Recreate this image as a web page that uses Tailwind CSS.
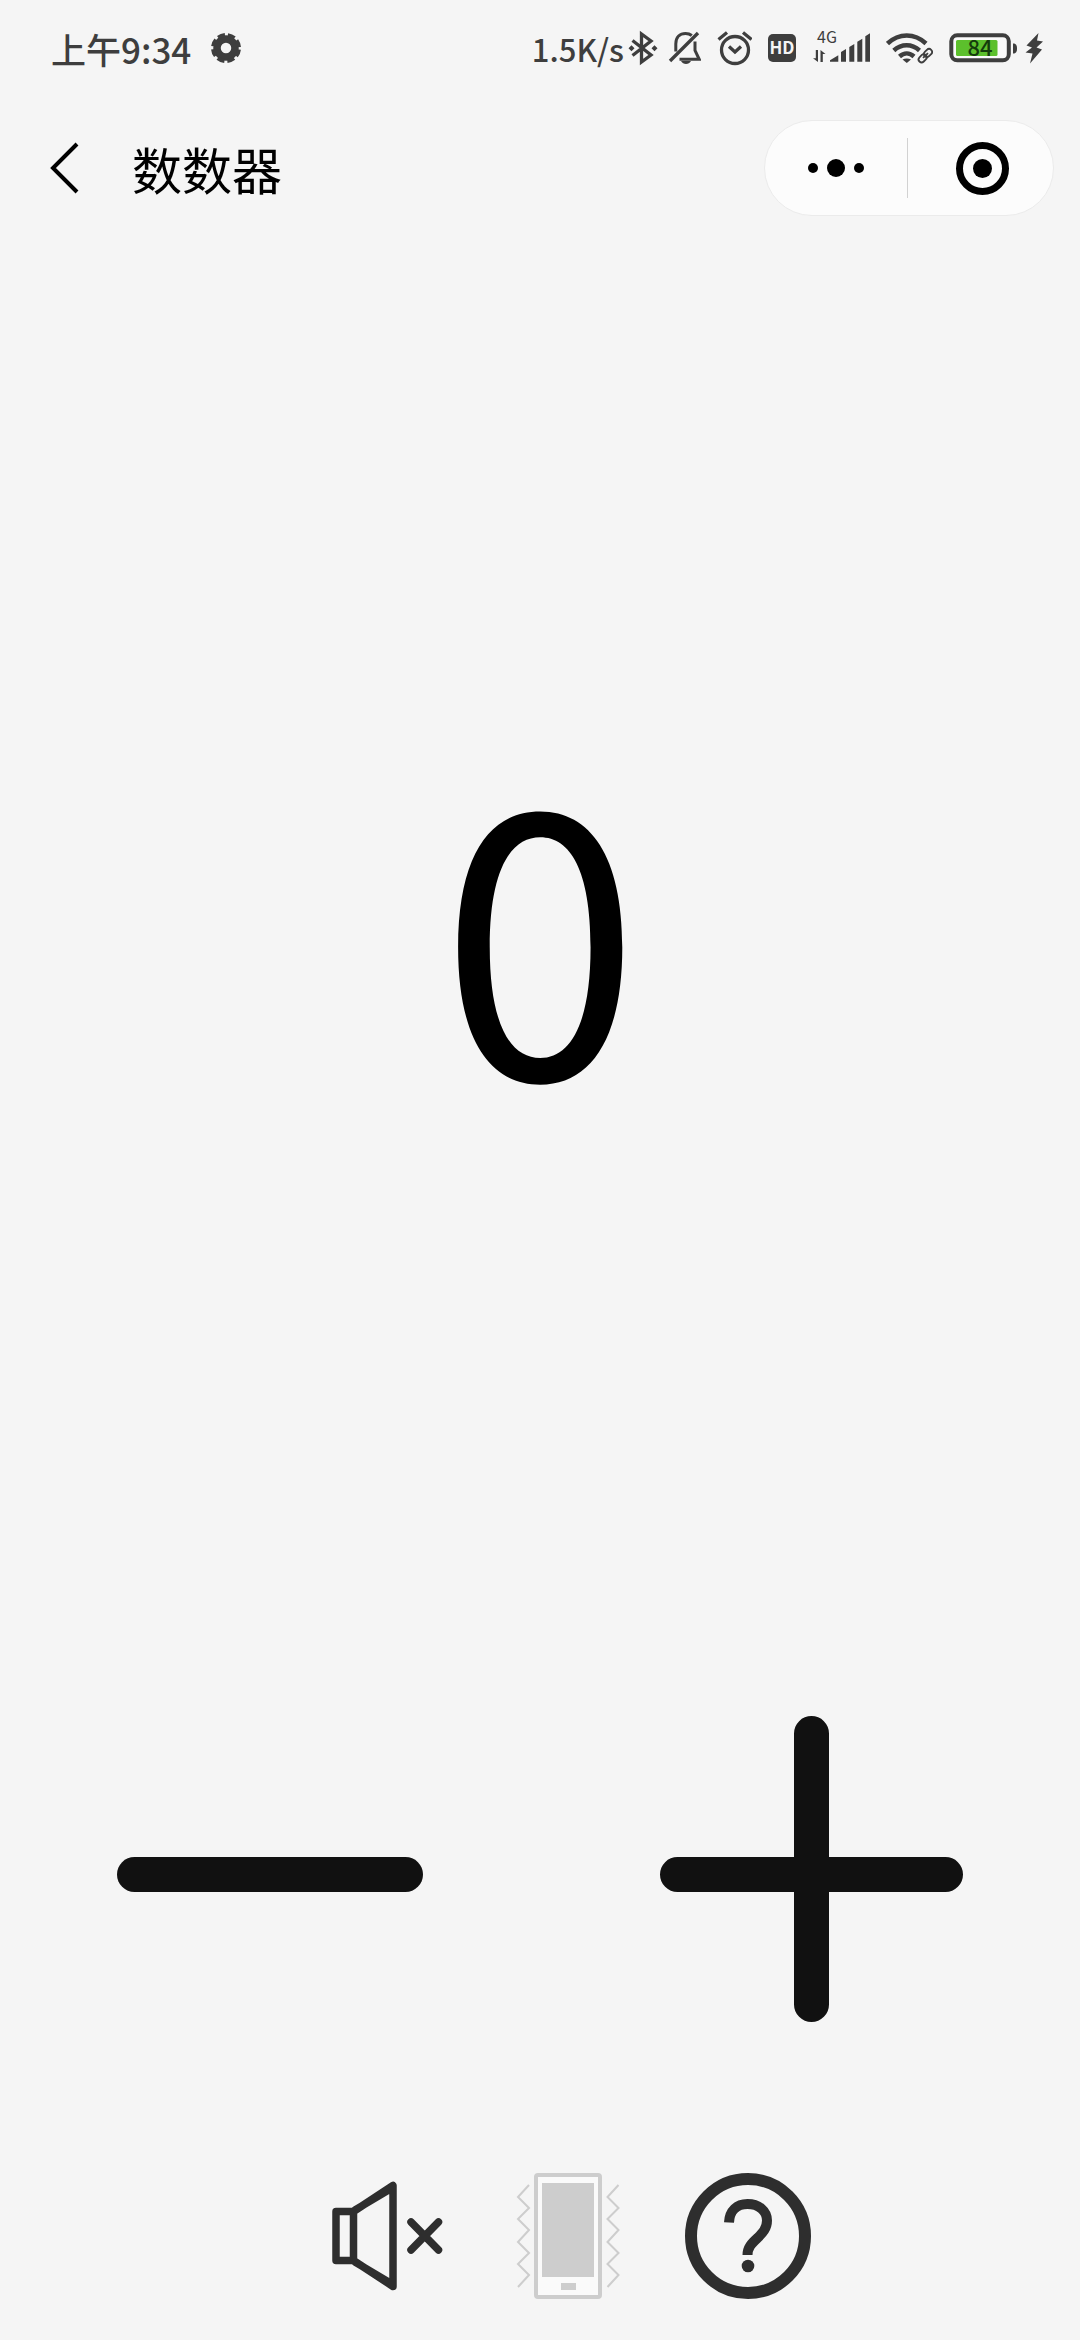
<!DOCTYPE html>
<html lang="zh-CN">
<head>
<meta charset="utf-8">
<meta name="viewport" content="width=device-width, initial-scale=1">
<title>数数器</title>
<script src="https://cdn.jsdelivr.net/npm/@tailwindcss/browser@4"></script>
</head>
<body class="flex min-h-screen flex-col bg-[#f5f5f5] font-['Noto_Sans_CJK_SC',sans-serif] text-black">

  <!-- Status bar -->
  <div class="flex h-24 shrink-0 items-center justify-between pl-[51px] pr-[37px] leading-none font-medium whitespace-nowrap text-[#3e3e3e]">
    <div class="flex items-center gap-5">
      <span class="text-[35px]">上午9:34</span>
      <svg class="h-[30px] w-[30px]" viewBox="0 0 30 30" fill="none" stroke="currentColor" aria-hidden="true">
        <circle cx="15" cy="15" r="9" stroke-width="7.5"/>
        <circle cx="15" cy="15" r="13" stroke-width="4" stroke-dasharray="7.2 3.01" stroke-dashoffset="-1.5"/>
      </svg>
    </div>
    <div class="flex items-center gap-4">
      <div class="flex items-center gap-2">
        <div class="flex items-center gap-1">
          <span class="text-[31px]">1.5K/s</span>
          <svg class="h-9 w-[31px]" viewBox="0 0 31 36" fill="none" stroke="currentColor" stroke-width="3.3" aria-hidden="true">
            <path d="M4.5 10.5 23 25 13.5 32V4L23 11 4.5 25.5"/>
            <path d="m3.5 15.3 3 3-3 3-3-3zM26.5 15.3l3 3-3 3-3-3z" fill="currentColor" stroke="none"/>
          </svg>
        </div>
        <svg class="h-9 w-[34px]" viewBox="0 0 34 36" fill="none" stroke="currentColor" stroke-width="3" aria-hidden="true">
          <path d="M8.8 21.5V14C8.800 7 13 3.500 18.500 3.500c2.500 0 4.500.6 6.300 2M28 11.500v9l4.200 8.800H12.500"/>
          <path d="M3 31 31 3" stroke-width="3.3"/>
          <path d="M14 31h10c-1 2-3 3-5 3s-4-1-5-3z" fill="currentColor" stroke="none"/>
        </svg>
      </div>
      <svg class="h-9 w-[35px]" viewBox="0 0 35 36" fill="none" stroke="currentColor" stroke-width="3.3" aria-hidden="true">
        <circle cx="18" cy="20" r="13.500"/>
        <path d="m1.500 9.500 8.500-7M26 2.500l8.500 7M12 16.500l6 5.500 6-5.500"/>
      </svg>
      <svg class="h-9 w-[29px]" viewBox="0 0 29 36" role="img" aria-label="HD">
        <rect y="4" width="28" height="28" rx="5" fill="currentColor"/>
        <text x="14" y="24" text-anchor="middle" font-size="17" font-weight="700" fill="#f5f5f5">HD</text>
      </svg>
      <svg class="h-9 w-[57px] overflow-visible" viewBox="0 0 57 36" fill="currentColor" role="img" aria-label="4G">
        <text x="4" y="13" font-size="16" font-weight="400">4G</text>
        <path d="M2.800 20H5v12L0 28.300h2.800zM7.500 32V20l5 4H9.800v8zM17 31.700v-1.500l8.300-4.900v6.400zM28 31.700V22l5-3v12.700zM36.300 31.700V17l5-3v17.700zM44.300 31.700V11.700l5-3v23zM52.300 31.700V6.300l4.700-3v28.400z"/>
      </svg>
      <svg class="h-9 w-[47px]" viewBox="0 0 47 36" fill="none" stroke="currentColor" stroke-width="4.500" aria-hidden="true">
        <path d="M1.500 13.500C13 2.800 28.500 2.800 40 13.500M7.800 20.500c7.700-7 18-7 25.700 0M13.500 26.500c4.500-4 10-4 14.500 0"/>
        <path d="M16.500 29.500c2.600-1.500 6-1.500 8.500 0L20.800 33z" fill="currentColor" stroke="none"/>
        <g transform="rotate(-45 39.500 25.500)" stroke-width="1.800">
          <rect x="31" y="22.500" width="9" height="6" rx="3"/>
          <rect x="38.500" y="22.500" width="9" height="6" rx="3"/>
          <path d="M36 25.500h7"/>
        </g>
      </svg>
      <div class="flex items-center gap-2">
        <svg class="h-9 w-[68px]" viewBox="0 0 68 36" role="img" aria-label="84%">
          <rect x="2.300" y="5.300" width="57.500" height="25" rx="6" fill="#fafafa" stroke="currentColor" stroke-width="4"/>
          <rect x="7" y="10" width="41.500" height="16" rx="1.500" fill="#5cc02c"/>
          <path d="M64 13.500c3 0 4 1.500 4 5s-1 5-4 5z" fill="currentColor"/>
          <text x="31" y="26" text-anchor="middle" font-size="22" font-weight="500" fill="#143c0c">84</text>
        </svg>
        <svg class="h-9 w-[18px]" viewBox="0 0 18 36" fill="currentColor" aria-hidden="true">
          <path d="M13.500 3 1.500 15.500l5.500 2-6.500 5 7 1L5 33.500 17 19.500l-5.500-2 6.500-6-6-1z"/>
        </svg>
      </div>
    </div>
  </div>

  <!-- Navigation bar -->
  <header class="flex h-36 shrink-0 items-center justify-between pl-[42px] pr-[26px]">
    <div class="flex items-center gap-[42px]">
      <button type="button" aria-label="返回" class="flex h-14 w-12 items-center justify-center">
        <svg class="h-14 w-12" viewBox="0 0 48 56" fill="none" stroke="currentColor" stroke-width="4">
          <path d="M35 4 11 28l24 24"/>
        </svg>
      </button>
      <h1 class="text-[50px] leading-none whitespace-nowrap">数数器</h1>
    </div>
    <div class="flex h-24 w-[290px] items-center rounded-full border border-[#ebebeb] bg-[#fcfcfc]">
      <button type="button" aria-label="更多" class="flex flex-1 items-center justify-center gap-[9px]">
        <span class="size-[10px] rounded-full bg-black"></span>
        <span class="size-[18px] rounded-full bg-black"></span>
        <span class="size-[10px] rounded-full bg-black"></span>
      </button>
      <span class="h-[60px] w-px bg-[#d2d2d2]"></span>
      <button type="button" aria-label="关闭" class="flex flex-1 items-center justify-center pl-1">
        <span class="flex size-[53px] items-center justify-center rounded-full border-[7px] border-black">
          <span class="size-[19px] rounded-full bg-black"></span>
        </span>
      </button>
    </div>
  </header>

  <!-- Counter -->
  <main class="flex flex-1 flex-col">
    <div class="flex flex-1 items-center justify-center pb-[50px]">
      <output class="text-[360px] leading-none">0</output>
    </div>
    <div class="grid grid-cols-2 justify-items-center pt-[61px] text-[#111]">
      <button type="button" aria-label="减一" class="size-[306px]">
        <svg class="size-full" viewBox="0 0 306 306" fill="none" stroke="currentColor" stroke-width="35" stroke-linecap="round">
          <path d="M17.500 158.500h271"/>
        </svg>
      </button>
      <button type="button" aria-label="加一" class="size-[306px]">
        <svg class="size-full" viewBox="0 0 306 306" fill="none" stroke="currentColor" stroke-width="35" stroke-linecap="round">
          <path d="M20.500 158.500h268M154.500 17.500v271"/>
        </svg>
      </button>
    </div>
  </main>

  <!-- Settings -->
  <footer class="flex justify-center gap-[54px] pt-[151px] pb-[41px] pl-14 text-[#2e2e2e]">
    <button type="button" aria-label="声音" class="size-[126px]">
      <svg class="size-full" viewBox="0 0 126 126" fill="none" stroke="currentColor" stroke-width="7.500" stroke-linejoin="round" stroke-linecap="round">
        <path d="M11 38.500h17.500v49H11zM28.500 38.500 68 12.500v101L28.500 87.500M30 37l37-22M30 89l37 22"/>
        <path d="m86 49 27.500 28M113.500 49 86 77"/>
      </svg>
    </button>
    <button type="button" aria-label="振动" class="size-[126px] text-[#cdcdcd]">
      <svg class="size-full" viewBox="0 0 126 126" fill="none" stroke="currentColor">
        <rect x="31" y="2" width="64" height="122" rx="2" fill="#fafafa" stroke-width="4"/>
        <path d="M37 10h52v94H37zM56 110h15v7H56z" fill="currentColor" stroke="none"/>
        <path d="M24 12 13 24l11 11-11 11 11 11-11 12 11 11-11 11 11 11-11 12M113.500 12l-11 12 11 11-11 11 11 11-11 12 11 11-11 11 11 11-11 12" stroke-width="2"/>
      </svg>
    </button>
    <button type="button" aria-label="帮助" class="size-[126px]">
      <svg class="size-full" viewBox="0 0 126 126" fill="none" stroke="currentColor">
        <circle cx="63" cy="63" r="57" stroke-width="12"/>
        <path d="M44 49.500C44.500 37.500 52 31 62.500 31 74 31 82 38 82 47.500c0 8-4.500 12.500-9.500 17.500C66.500 70.500 62.500 74.500 62.500 82" stroke-width="10"/>
        <circle cx="63" cy="93" r="6.300" fill="currentColor" stroke="none"/>
      </svg>
    </button>
  </footer>
</body>
</html>
